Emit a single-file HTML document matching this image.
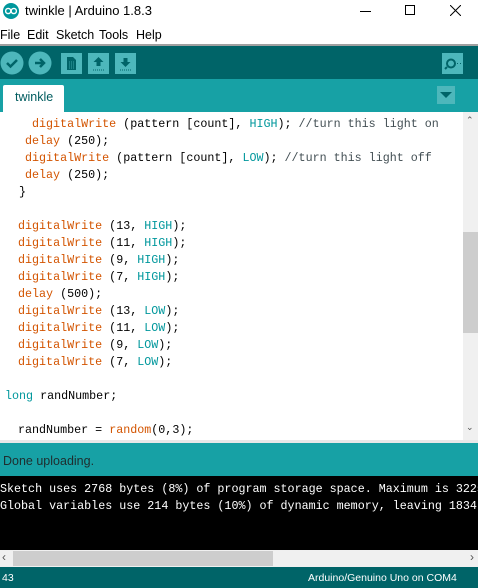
<!DOCTYPE html>
<html><head><meta charset="utf-8"><style>
*{margin:0;padding:0;box-sizing:border-box}
body{width:478px;height:588px;overflow:hidden;position:relative;background:#fff;font-family:"Liberation Sans",sans-serif}
.a{position:absolute}
.code{position:absolute;font-family:"Liberation Mono",monospace;font-size:11.7px;line-height:17px;white-space:pre;color:#000}
.o{color:#d35400}.t{color:#00979c}.c{color:#434f54}
.btn{position:absolute;top:53px;width:21px;height:21px;background:#4db7bb}
.m{position:absolute;top:28px;font-size:12.5px;color:#000}
</style></head><body>
<!-- title -->
<svg class="a" style="left:3px;top:3px" width="16" height="16" viewBox="0 0 16 16"><circle cx="8" cy="8" r="8" fill="#00979c"/><circle cx="5.2" cy="8" r="2.6" fill="none" stroke="#fff" stroke-width="1.4"/><circle cx="10.8" cy="8" r="2.6" fill="none" stroke="#fff" stroke-width="1.4"/></svg>
<div class="a" style="left:25px;top:3px;font-size:13px;color:#000">twinkle | Arduino 1.8.3</div>
<div class="a" style="left:360px;top:11px;width:11px;height:1px;background:#000"></div>
<div class="a" style="left:405px;top:5px;width:10px;height:10px;border:1px solid #000"></div>
<svg class="a" style="left:450px;top:5px" width="11" height="11"><path d="M0 0L11 11M11 0L0 11" stroke="#000" stroke-width="1"/></svg>
<!-- menu -->
<div class="m" style="left:0">File</div>
<div class="m" style="left:27px">Edit</div>
<div class="m" style="left:56px">Sketch</div>
<div class="m" style="left:99px">Tools</div>
<div class="m" style="left:136px">Help</div>
<div class="a" style="left:0;top:44px;width:478px;height:2px;background:#a0a0a0"></div>
<!-- toolbar -->
<div class="a" style="left:0;top:46px;width:478px;height:33px;background:#006468"></div>
<svg class="a" style="left:0;top:51px" width="54" height="24"><circle cx="12" cy="12" r="11.5" fill="#4db7bb"/><path d="M7 12l3.5 3.5L17 9" stroke="#006468" stroke-width="2.5" fill="none"/><circle cx="40" cy="12" r="11.5" fill="#4db7bb"/><path d="M35 12h9M40 8l4 4-4 4" stroke="#006468" stroke-width="2.5" fill="none"/></svg>
<div class="btn" style="left:61px"><svg width="21" height="21"><path d="M6 4h6l3 3v10H6z" fill="#006468"/><path d="M8 9h5M8 11h5M8 13h5M8 15h5" stroke="#4db7bb" stroke-width="0.8" stroke-dasharray="1 1"/></svg></div>
<div class="btn" style="left:88px"><svg width="21" height="21"><path d="M10.5 4l5 5h-3v4h-4V9h-3z" fill="#006468"/><path d="M5 17h11" stroke="#006468" stroke-dasharray="1 1"/></svg></div>
<div class="btn" style="left:115px"><svg width="21" height="21"><path d="M10.5 14l5-5h-3V5h-4v4h-3z" fill="#006468"/><path d="M5 17h11" stroke="#006468" stroke-dasharray="1 1"/></svg></div>
<div class="btn" style="left:442px"><svg width="21" height="21"><circle cx="9" cy="10.5" r="4" fill="none" stroke="#006468" stroke-width="2"/><path d="M5 14l-2 2" stroke="#006468" stroke-width="2"/><path d="M15 10.5h1M18 10.5h1" stroke="#006468"/></svg></div>
<!-- tabs -->
<div class="a" style="left:0;top:79px;width:478px;height:33px;background:#17a1a5"></div>
<div class="a" style="left:3px;top:85px;width:61px;height:27px;background:#fff;border-radius:2px 2px 0 0"></div>
<div class="a" style="left:15px;top:90px;font-size:12.5px;color:#005c5f">twinkle</div>
<div class="a" style="left:437px;top:86px;width:18px;height:18px;background:#4db7bb"></div>
<svg class="a" style="left:440px;top:92px" width="12" height="6"><path d="M0 0h12L6 6z" fill="#006468"/></svg>
<!-- editor -->
<div class="a" style="left:463px;top:112px;width:15px;height:328px;background:#f0f0f0"></div>
<div class="a" style="left:463px;top:232px;width:15px;height:101px;background:#cdcdcd"></div>
<div class="a" style="left:466px;top:115px;font-size:9px;color:#555">&#8963;</div>
<div class="a" style="left:466px;top:422px;font-size:9px;color:#555">&#8964;</div>
<div class="a" style="left:0;top:112px;width:463px;height:328px;overflow:hidden">
<div class="code" style="left:32px;top:4px"><span class="o">digitalWrite</span> (pattern [count], <span class="t">HIGH</span>); <span class="c">//turn this light on</span></div>
<div class="code" style="left:25px;top:21px"><span class="o">delay</span> (250);
<span class="o">digitalWrite</span> (pattern [count], <span class="t">LOW</span>); <span class="c">//turn this light off</span>
<span class="o">delay</span> (250);</div>
<div class="code" style="left:19px;top:72px">}</div>
<div class="code" style="left:18px;top:106px"><span class="o">digitalWrite</span> (13, <span class="t">HIGH</span>);
<span class="o">digitalWrite</span> (11, <span class="t">HIGH</span>);
<span class="o">digitalWrite</span> (9, <span class="t">HIGH</span>);
<span class="o">digitalWrite</span> (7, <span class="t">HIGH</span>);
<span class="o">delay</span> (500);
<span class="o">digitalWrite</span> (13, <span class="t">LOW</span>);
<span class="o">digitalWrite</span> (11, <span class="t">LOW</span>);
<span class="o">digitalWrite</span> (9, <span class="t">LOW</span>);
<span class="o">digitalWrite</span> (7, <span class="t">LOW</span>);</div>
<div class="code" style="left:5px;top:276px"><span class="t">long</span> randNumber;</div>
<div class="code" style="left:18px;top:310px">randNumber = <span class="o">random</span>(0,3);</div>
</div>
<div class="a" style="left:0;top:440px;width:478px;height:3px;background:#e8e8e8"></div>
<!-- status -->
<div class="a" style="left:0;top:443px;width:478px;height:33px;background:#17a1a5"></div>
<div class="a" style="left:3px;top:454px;font-size:12.5px;color:#1f2d2e">Done uploading.</div>
<!-- console -->
<div class="a" style="left:0;top:476px;width:478px;height:74px;background:#000;overflow:hidden">
<div class="code" style="left:0;top:5px;color:#fff">Sketch uses 2768 bytes (8%) of program storage space. Maximum is 32256 bytes.
Global variables use 214 bytes (10%) of dynamic memory, leaving 1834 bytes</div>
</div>
<div class="a" style="left:0;top:550px;width:478px;height:17px;background:#f0f0f0"></div>
<div class="a" style="left:13px;top:551px;width:260px;height:15px;background:#cdcdcd"></div>
<div class="a" style="left:2px;top:550px;font-size:12px;color:#555">&#8249;</div>
<div class="a" style="left:470px;top:550px;font-size:12px;color:#555">&#8250;</div>
<!-- footer -->
<div class="a" style="left:0;top:567px;width:478px;height:21px;background:#006468"></div>
<div class="a" style="left:2px;top:572px;font-size:10.5px;color:#fff">43</div>
<div class="a" style="left:308px;top:572px;font-size:10.5px;color:#fff">Arduino/Genuino Uno on COM4</div>
</body></html>
